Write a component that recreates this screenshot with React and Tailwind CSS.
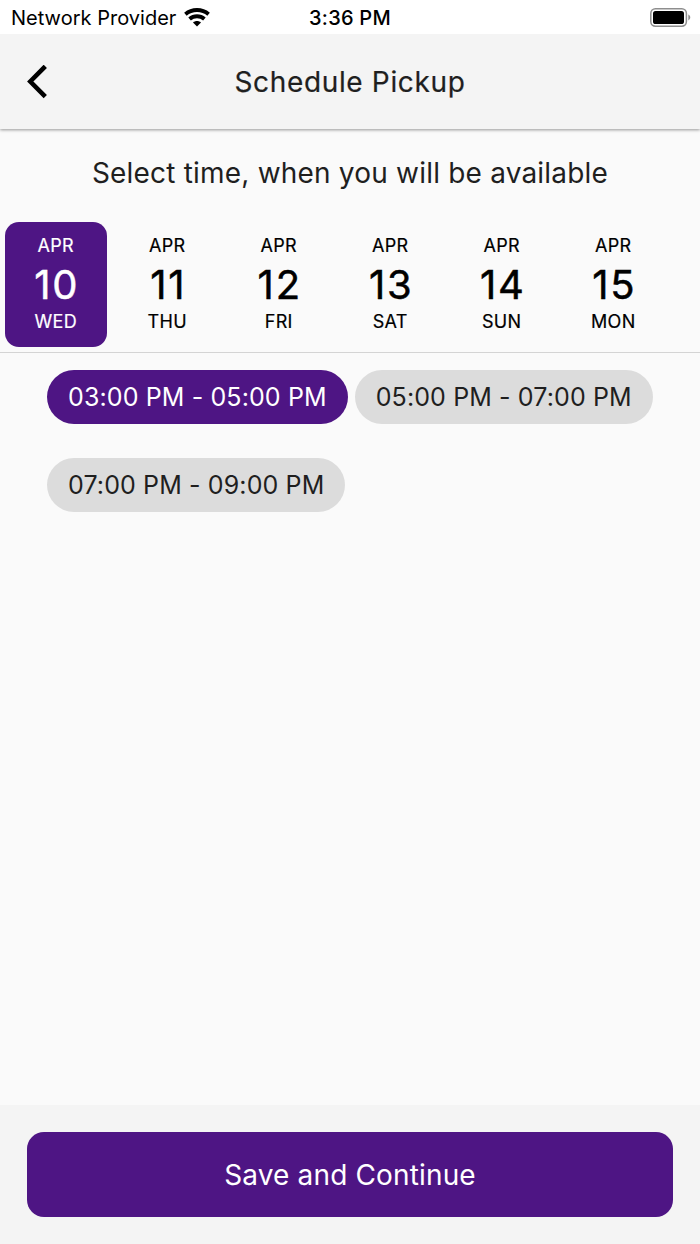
import React, { useState } from "react";

const days = [
  { month: "APR", date: 10, day: "WED" },
  { month: "APR", date: 11, day: "THU" },
  { month: "APR", date: 12, day: "FRI" },
  { month: "APR", date: 13, day: "SAT" },
  { month: "APR", date: 14, day: "SUN" },
  { month: "APR", date: 15, day: "MON" },
];

const slots = ["03:00 PM - 05:00 PM", "05:00 PM - 07:00 PM", "07:00 PM - 09:00 PM"];

const WifiIcon = () => (
  <svg width="26" height="19" viewBox="0 0 26 19" fill="none" stroke="#000" strokeWidth="3.9">
    <path d="M1.4 6.2C8 0.6 18 0.6 24.6 6.2" />
    <path d="M5.6 10.9C9.8 7.3 16.2 7.3 20.4 10.9" />
    <path d="M9 14.6C11.2 12.6 14.8 12.6 17 14.6L13 18.6Z" fill="#000" stroke="none" />
  </svg>
);

const BatteryIcon = () => (
  <svg width="41" height="19" viewBox="0 0 41 19">
    <rect x="0.8" y="0.8" width="35.6" height="17.4" rx="4.6" fill="none" stroke="#8e8e8e" strokeWidth="1.5" />
    <rect x="3" y="3" width="31" height="13" rx="2.6" fill="#000" />
    <path d="M38.3 6.6C40.9 7.6 40.9 11.4 38.3 12.4Z" fill="#8e8e8e" />
  </svg>
);

const App = () => {
  const [activeDay, setActiveDay] = useState(10);
  const [activeSlot, setActiveSlot] = useState(slots[0]);

  return (
    <main className="flex h-[1244px] w-[700px] flex-col overflow-hidden bg-[#fafafa] font-['Inter',sans-serif] text-[#1f1f1f]">
      {/* Status bar */}
      <div className="z-20 grid h-[34px] shrink-0 grid-cols-3 items-center bg-white pr-[9px] pl-[11px] text-black">
        <div className="flex items-center gap-2">
          <span className="pt-[2px] text-[20px] leading-[32px] tracking-[0.02px] whitespace-nowrap">Network Provider</span>
          <WifiIcon />
        </div>
        <span className="pt-[2px] pr-[2px] text-center text-[20px] leading-[32px] font-medium tracking-[0.25px]">3:36 PM</span>
        <div className="flex justify-end">
          <BatteryIcon />
        </div>
      </div>

      {/* Header */}
      <header className="z-10 grid h-[95px] shrink-0 grid-cols-[80px_1fr_80px] items-center bg-[#f4f4f4] shadow-[0_1px_3px_rgba(0,0,0,0.4)]">
        <button className="pl-[27px]" aria-label="Back">
          <svg width="20" height="34" viewBox="0 0 20 34" fill="none" stroke="#000" strokeWidth="4.6">
            <path d="M18.3 1.3L3.3 16.5L18.3 31.7" />
          </svg>
        </button>
        <h1 className="text-center text-[28px] leading-[34px] tracking-[0.65px] [-webkit-text-stroke:0.2px]">Schedule Pickup</h1>
      </header>

      <h2 className="mt-[26px] text-center text-[28px] leading-[36px] tracking-[0.2px]">
        Select time, when you will be available
      </h2>

      {/* Days */}
      <div className="mt-[31px] flex h-[131px] shrink-0 gap-[10px] border-b border-[#d4d4d4] pl-[5px]">
        {days.map((d) => (
          <button
            key={d.date}
            onClick={() => setActiveDay(d.date)}
            className={`flex h-[125px] w-[101.5px] shrink-0 flex-col items-center rounded-[14px] pt-[13px] [-webkit-text-stroke:0.2px] ${
              activeDay === d.date ? "bg-[#4e1584] text-white" : "text-black"
            }`}
          >
            <span className="text-[18px] leading-[22px] tracking-[0.35px]">{d.month}</span>
            <span className="mt-[4px] pl-[2px] text-[40px] leading-[48px] tracking-[1.8px] [-webkit-text-stroke:0.5px]">{d.date}</span>
            <span className="mt-[2px] text-[18px] leading-[22px] tracking-[0.35px]">{d.day}</span>
          </button>
        ))}
      </div>

      {/* Time slots */}
      <div className="mt-[17px] flex flex-wrap gap-x-[7px] gap-y-[34px] pl-[47px]">
        {slots.map((slot) => (
          <button
            key={slot}
            onClick={() => setActiveSlot(slot)}
            className={`h-[54px] rounded-full px-[21px] text-[25px] leading-[54px] tracking-[0.12px] whitespace-nowrap ${
              activeSlot === slot ? "bg-[#4e1584] text-white" : "bg-[#dcdcdc]"
            }`}
          >
            {slot}
          </button>
        ))}
      </div>

      {/* Footer */}
      <footer className="mt-auto h-[139px] shrink-0 bg-[#f4f4f4] px-[27px] pt-[27px]">
        <button className="h-[85px] w-full rounded-[17px] bg-[#4e1584] text-[28px] tracking-[0.15px] text-white">
          Save and Continue
        </button>
      </footer>
    </main>
  );
};

export default App;
